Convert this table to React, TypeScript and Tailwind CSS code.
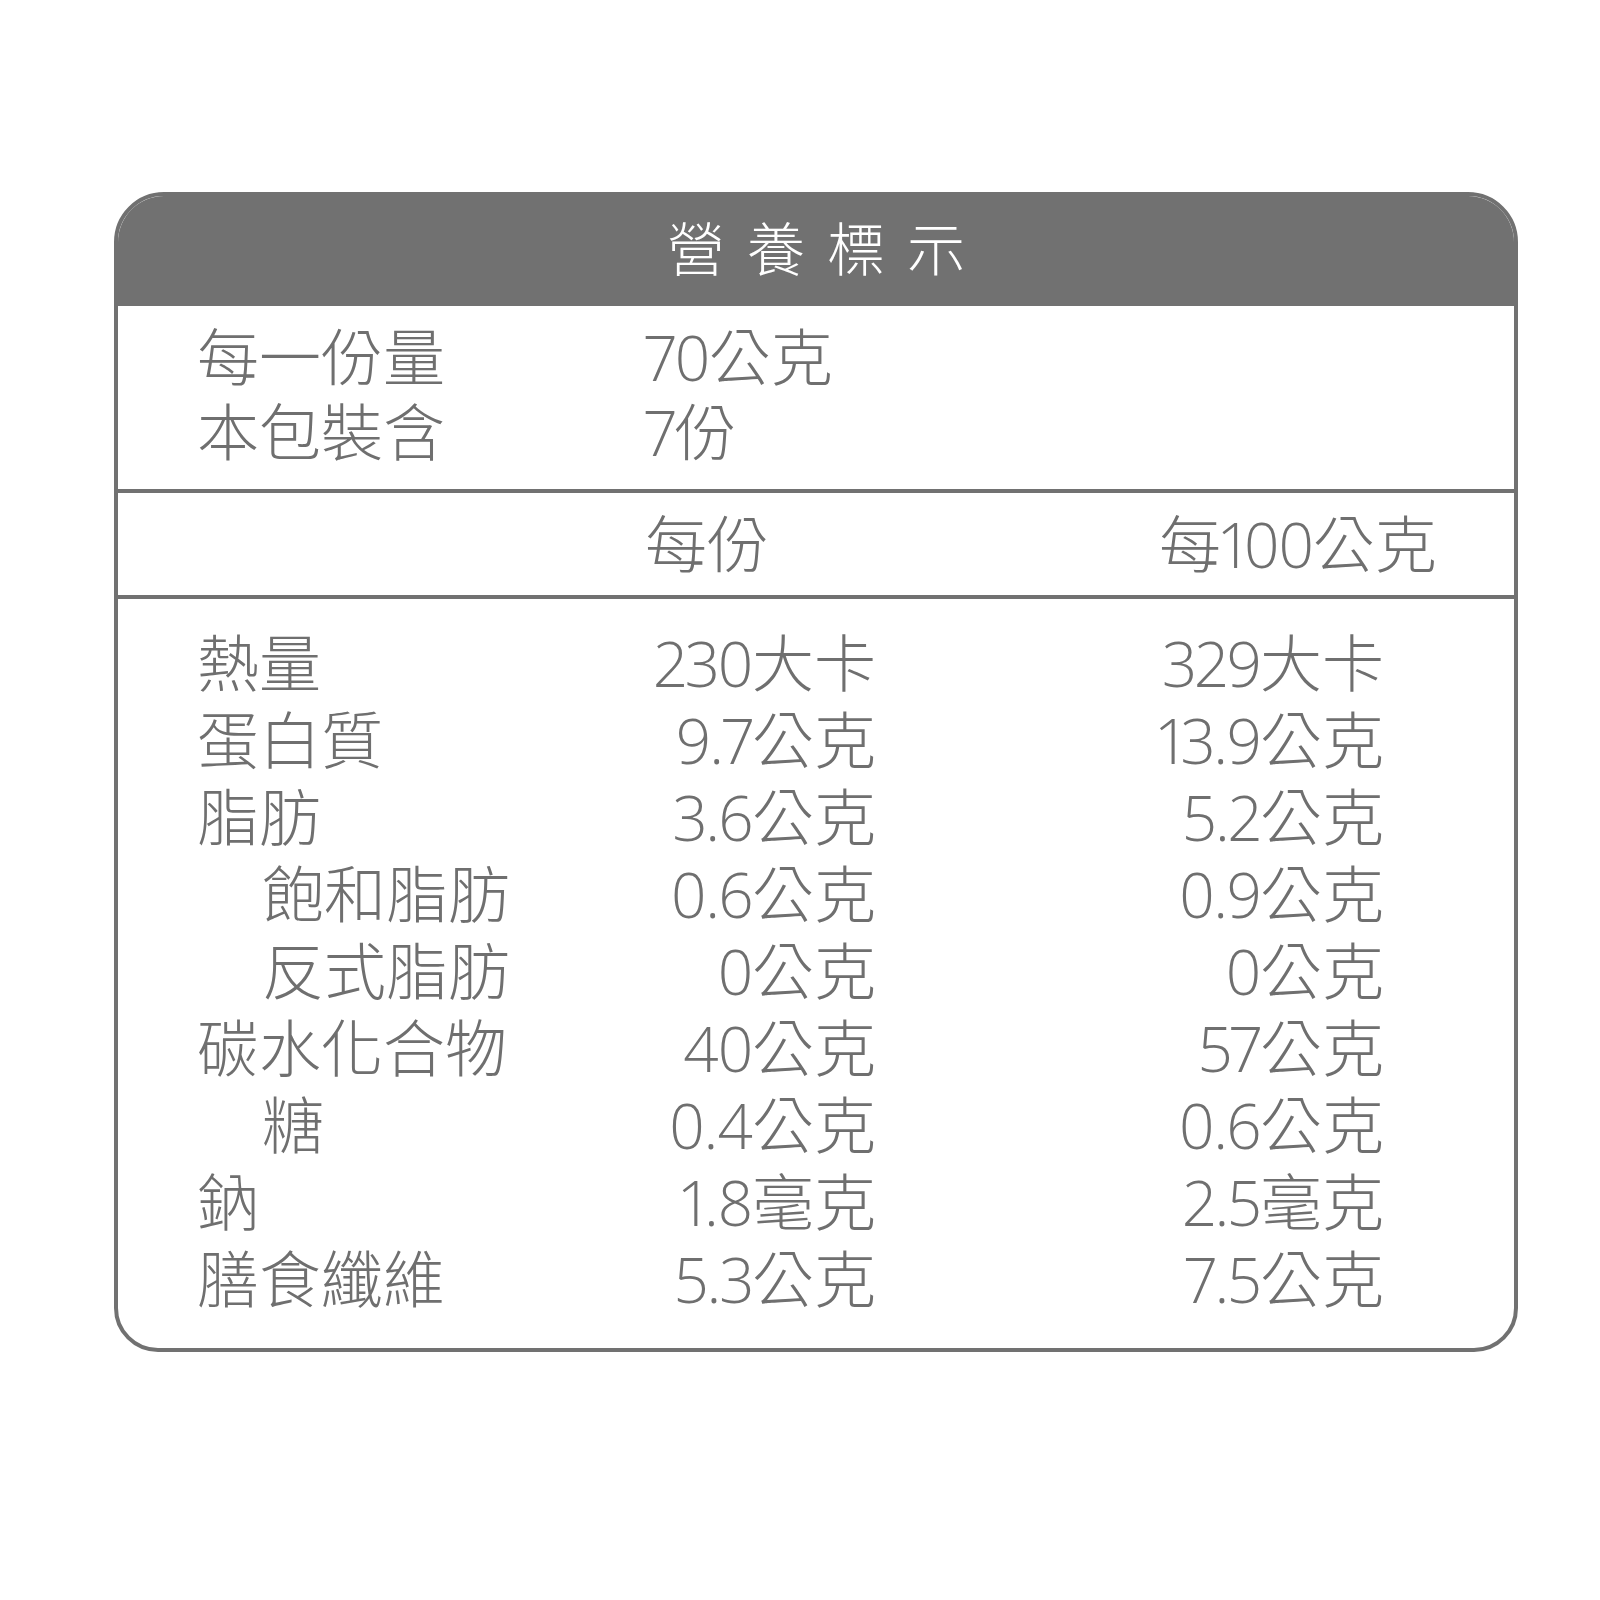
const rows: { label: string; indent?: boolean; serving: string; per100: string }[] = [
  { label: "熱量", serving: "230大卡", per100: "329大卡" },
  { label: "蛋白質", serving: "9.7公克", per100: "13.9公克" },
  { label: "脂肪", serving: "3.6公克", per100: "5.2公克" },
  { label: "飽和脂肪", indent: true, serving: "0.6公克", per100: "0.9公克" },
  { label: "反式脂肪", indent: true, serving: "0公克", per100: "0公克" },
  { label: "碳水化合物", serving: "40公克", per100: "57公克" },
  { label: "糖", indent: true, serving: "0.4公克", per100: "0.6公克" },
  { label: "鈉", serving: "1.8毫克", per100: "2.5毫克" },
  { label: "膳食纖維", serving: "5.3公克", per100: "7.5公克" },
];

// digits are set a bit tighter than the CJK units
function Amount({ value }: { value: string }) {
  const m = value.match(/^([^\d]*)([\d.]+)(.*)$/);
  if (!m) return <>{value}</>;
  return (
    <>
      {m[1]}
      <span className="tracking-[-1.5px] proportional-nums">{m[2]}</span>
      {m[3]}
    </>
  );
}

export default function App() {
  return (
    <div
      className="min-h-[1600px] w-[1600px] bg-white pt-[192px] pl-[114px] text-[#6f6f6f] font-light"
      style={{ fontFamily: '"Open Sans", "Noto Sans CJK TC", sans-serif' }}
    >
      <div className="w-[1404px] border-4 border-[#717171] rounded-t-[50px] rounded-b-[44px] overflow-hidden">
        {/* title */}
        <div className="h-[110px] bg-[#717171] flex items-center justify-center">
          <h1 className="text-[58px] leading-none text-white tracking-[22px] pl-[22px] -mt-[4px]">營養標示</h1>
        </div>

        {/* serving info */}
        <div className="grid grid-cols-[448px_auto] pl-[79px] pt-[14px] pb-[19px] text-[62px] leading-[75px]">
          <div>每一份量</div>
          <div><Amount value="70公克" /></div>
          <div>本包裝含</div>
          <div><Amount value="7份" /></div>
        </div>

        <div className="h-[4px] bg-[#717171]" />

        {/* column headings */}
        <div className="h-[102px] grid grid-cols-[448px_514px_auto] items-center pl-[79px] text-[62px] leading-[75px]">
          <div />
          <div>每份</div>
          <div><Amount value="每100公克" /></div>
        </div>

        <div className="h-[4px] bg-[#717171]" />

        {/* nutrients */}
        <div className="grid grid-cols-[448px_231px_508px] pl-[79px] pt-[26px] pb-[30px] text-[62px] leading-[77px]">
          {rows.map((r) => (
            <div key={r.label} className="contents">
              <div className={r.indent ? "pl-[65px]" : ""}>{r.label}</div>
              <div className="text-right whitespace-nowrap"><Amount value={r.serving} /></div>
              <div className="text-right whitespace-nowrap"><Amount value={r.per100} /></div>
            </div>
          ))}
        </div>
      </div>
    </div>
  );
}
